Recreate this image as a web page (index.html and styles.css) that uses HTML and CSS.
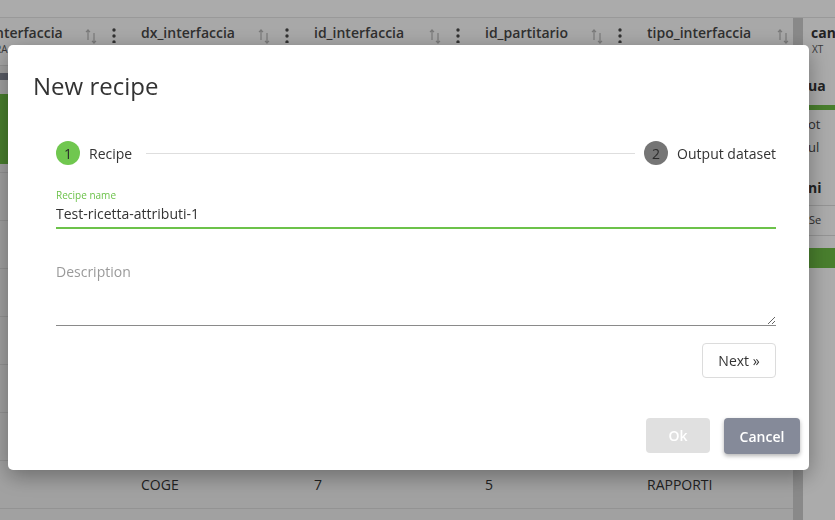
FILE: index.html
```html
<!DOCTYPE html>
<html lang="it">
<head>
<meta charset="utf-8">
<title>New recipe</title>
<link rel="stylesheet" href="styles.css">
</head>
<body>
<div class="app">
  <div class="topband"></div>
  <div class="main">
    <div class="table">
      <div class="thead">
        <div class="hcell col1">
          <div class="hname scrolled"><div class="hn">nterfaccia</div><div class="hs">RA</div></div>
          <svg class="sort" viewBox="0 0 12 16" width="12" height="16"><path d="M3 12V2M1 4.2L3 2l2 2.2M9 5v10M7 12.8L9 15l2-2.2" fill="none" stroke="#b5b5b5" stroke-width="1.2"/></svg>
          <svg class="kebab" viewBox="0 0 4 16" width="4" height="16"><circle cx="2" cy="3" r="1.7"/><circle cx="2" cy="9" r="1.7"/><circle cx="2" cy="15" r="1.7"/></svg>
        </div>
        <div class="hcell col2">
          <div class="hname"><div class="hn">dx_interfaccia</div><div class="hs">STRING</div></div>
          <svg class="sort" viewBox="0 0 12 16" width="12" height="16"><path d="M3 12V2M1 4.2L3 2l2 2.2M9 5v10M7 12.8L9 15l2-2.2" fill="none" stroke="#b5b5b5" stroke-width="1.2"/></svg>
          <svg class="kebab" viewBox="0 0 4 16" width="4" height="16"><circle cx="2" cy="3" r="1.7"/><circle cx="2" cy="9" r="1.7"/><circle cx="2" cy="15" r="1.7"/></svg>
        </div>
        <div class="hcell col3">
          <div class="hname"><div class="hn">id_interfaccia</div><div class="hs">INTEGER</div></div>
          <svg class="sort" viewBox="0 0 12 16" width="12" height="16"><path d="M3 12V2M1 4.2L3 2l2 2.2M9 5v10M7 12.8L9 15l2-2.2" fill="none" stroke="#b5b5b5" stroke-width="1.2"/></svg>
          <svg class="kebab" viewBox="0 0 4 16" width="4" height="16"><circle cx="2" cy="3" r="1.7"/><circle cx="2" cy="9" r="1.7"/><circle cx="2" cy="15" r="1.7"/></svg>
        </div>
        <div class="hcell col4">
          <div class="hname"><div class="hn">id_partitario</div><div class="hs">INTEGER</div></div>
          <svg class="sort" viewBox="0 0 12 16" width="12" height="16"><path d="M3 12V2M1 4.2L3 2l2 2.2M9 5v10M7 12.8L9 15l2-2.2" fill="none" stroke="#b5b5b5" stroke-width="1.2"/></svg>
          <svg class="kebab" viewBox="0 0 4 16" width="4" height="16"><circle cx="2" cy="3" r="1.7"/><circle cx="2" cy="9" r="1.7"/><circle cx="2" cy="15" r="1.7"/></svg>
        </div>
        <div class="hcell col5">
          <div class="hname"><div class="hn">tipo_interfaccia</div><div class="hs">STRING</div></div>
          <svg class="sort" viewBox="0 0 12 16" width="12" height="16"><path d="M3 12V2M1 4.2L3 2l2 2.2M9 5v10M7 12.8L9 15l2-2.2" fill="none" stroke="#b5b5b5" stroke-width="1.2"/></svg>
          <svg class="kebab" viewBox="0 0 4 16" width="4" height="16"><circle cx="2" cy="3" r="1.7"/><circle cx="2" cy="9" r="1.7"/><circle cx="2" cy="15" r="1.7"/></svg>
        </div>
      </div>
      <div class="qrow">
        <div class="qbar"></div>
        <div class="qgreen"></div>
      </div>
      <div class="row"></div>
      <div class="row"></div>
      <div class="row"></div>
      <div class="row"></div>
      <div class="row"></div>
      <div class="row"></div>
      <div class="row"><span class="c col1"></span><span class="c col2">COGE</span><span class="c col3">7</span><span class="c col4">5</span><span class="c col5">RAPPORTI</span></div>
      <div class="row"></div>
    </div>
    <div class="scrollbar"></div>
    <div class="panel">
      <div class="p-head"><div class="p-name">can</div><div class="p-type">XT</div></div>
      <div class="p-title">ua</div>
      <div class="p-bar"></div>
      <div class="p-line">ot</div>
      <div class="p-line">ul</div>
      <div class="p-title p-title2">ni</div>
      <div class="p-sect">Se</div>
      <div class="p-block"></div>
    </div>
  </div>
</div>

<div class="overlay">
  <div class="modal">
    <h1 class="modal-title">New recipe</h1>
    <div class="modal-body">
      <div class="stepper">
        <span class="step-num active">1</span>
        <span class="step-label">Recipe</span>
        <span class="step-line"></span>
        <span class="step-num">2</span>
        <span class="step-label">Output dataset</span>
      </div>
      <label class="field-label">Recipe name</label>
      <input class="field-input" type="text" value="Test-ricetta-attributi-1">
      <textarea class="field-area" placeholder="Description"></textarea>
      <div class="next-row"><button class="btn-next">Next »</button></div>
    </div>
    <div class="modal-footer">
      <button class="btn btn-ok">Ok</button>
      <button class="btn btn-cancel">Cancel</button>
    </div>
  </div>
</div>
</body>
</html>
```
FILE: styles.css
```css
html, body {
  margin: 0;
  padding: 0;
}
body {
  width: 835px;
  height: 520px;
  overflow: hidden;
  font-family: "Open Sans", "Noto Sans", sans-serif;
  color: #333;
  background: #fff;
}

/* ---------- background app ---------- */
.app {
  height: 520px;
  display: flex;
  flex-direction: column;
}
.topband {
  height: 17px;
  flex-shrink: 0;
  background: #fff;
  border-bottom: 1px solid #e4e4e4;
}
.main {
  flex: 1;
  display: flex;
  min-height: 0;
}
.table {
  width: 793px;
  flex-shrink: 0;
  overflow: hidden;
  background: #f1f1f1;
}
.thead {
  display: flex;
  height: 48px;
  box-sizing: border-box;
  border-bottom: 1px solid #dcdcdc;
  background: #fbfbfb;
  white-space: nowrap;
}
.col1 { width: 141px; }
.col2 { width: 173px; }
.col3 { width: 171px; }
.col4 { width: 162px; }
.col5 { width: 186px; }
.hcell {
  flex-shrink: 0;
  display: flex;
  align-items: flex-start;
  box-sizing: border-box;
  padding: 8px 25px 0 0;
}
.hname {
  flex: 1;
  min-width: 0;
}
.hname.scrolled {
  margin-left: -5px;
}
.hn {
  font-size: 14px;
  font-weight: 600;
  line-height: 14px;
  color: #474747;
}
.hs {
  margin-top: 3px;
  font-size: 10px;
  line-height: 12px;
  color: #555;
}
.sort {
  margin-top: 2px;
  margin-right: 15px;
  flex-shrink: 0;
}
.kebab {
  margin-top: 1px;
  fill: #4a4a4a;
  flex-shrink: 0;
}
.qrow {
  height: 107px;
  box-sizing: border-box;
  border-bottom: 1px solid #dcdcdc;
  padding-top: 7px;
}
.qbar {
  width: 130px;
  height: 7px;
  background: #858a98;
}
.qgreen {
  width: 130px;
  height: 70px;
  margin-top: 14px;
  background: #6dbd44;
}
.row {
  display: flex;
  align-items: center;
  height: 48px;
  box-sizing: border-box;
  border-bottom: 1px solid #dcdcdc;
  font-size: 14px;
  color: #333;
  white-space: nowrap;
}
.c {
  flex-shrink: 0;
}
.scrollbar {
  width: 10px;
  flex-shrink: 0;
  background: #cdcdcd;
}
.panel {
  flex: 1;
  min-width: 0;
  background: #fff;
  overflow: hidden;
  white-space: nowrap;
}
.p-head {
  height: 48px;
  box-sizing: border-box;
  padding: 8px 0 0 8px;
}
.p-name {
  font-size: 14px;
  font-weight: 700;
  line-height: 14px;
  color: #333;
}
.p-type {
  margin-top: 3px;
  font-size: 10px;
  line-height: 12px;
  color: #555;
  margin-left: 1px;
}
.p-title {
  margin-top: 10px;
  padding-left: 5px;
  font-size: 14px;
  font-weight: 700;
  line-height: 20px;
  color: #333;
}
.p-title2 {
  margin-top: 22px;
}
.p-bar {
  margin-top: 9px;
  height: 5px;
  background: #6dbd44;
}
.p-line {
  margin-top: 5px;
  padding-left: 5px;
  font-size: 13px;
  line-height: 18px;
  color: #444;
}
.p-sect {
  margin-top: 7px;
  padding: 6px 0 7px 6px;
  border-top: 1px solid #ddd;
  border-bottom: 1px solid #ddd;
  font-size: 11px;
  line-height: 16px;
  color: #444;
}
.p-block {
  margin-top: 12px;
  height: 20px;
  background: #6dbd44;
}

/* ---------- modal ---------- */
.overlay {
  position: fixed;
  inset: 0;
  background: rgba(0, 0, 0, 0.33);
}
.modal {
  margin: 45px 0 0 8px;
  width: 801px;
  height: 425px;
  box-sizing: border-box;
  background: #fff;
  border-radius: 5px;
  box-shadow: 0 6px 22px rgba(0, 0, 0, 0.35);
  display: flex;
  flex-direction: column;
}
.modal-title {
  margin: 24px 0 0 0;
  padding: 0 25px;
  font-size: 24px;
  font-weight: 400;
  line-height: 33px;
  color: #333;
}
.modal-body {
  padding: 0 33px 0 48px;
  display: flex;
  flex-direction: column;
}
.stepper {
  display: flex;
  align-items: center;
  height: 24px;
  margin-top: 39px;
}
.step-num {
  width: 24px;
  height: 24px;
  border-radius: 50%;
  background: #757575;
  color: #2b2b2b;
  display: flex;
  align-items: center;
  justify-content: center;
  font-size: 14px;
  flex-shrink: 0;
}
.step-num.active {
  background: #70c74f;
}
.step-label {
  margin-left: 9px;
  font-size: 14px;
  color: #333;
}
.step-line {
  flex: 1;
  height: 1px;
  background: #dedede;
  margin: 0 9px 0 14px;
}
.field-label {
  margin-top: 23px;
  font-size: 10px;
  line-height: 14px;
  color: #6cc24a;
}
.field-input {
  margin: 2px 0 0 0;
  padding: 0 0 3px 0;
  height: 20px;
  border: 0;
  border-bottom: 2px solid #6cc24a;
  outline: none;
  font-family: "Open Sans", "Noto Sans", sans-serif;
  font-size: 14px;
  line-height: 20px;
  color: #333;
  background: transparent;
}
.field-area {
  margin: 33px 0 0 0;
  padding: 0;
  height: 64px;
  box-sizing: border-box;
  border: 0;
  border-bottom: 1px solid #8a8a8a;
  outline: none;
  font-family: "Open Sans", "Noto Sans", sans-serif;
  font-size: 14px;
  line-height: 20px;
  color: #333;
  background: transparent;
}
.field-area::placeholder {
  color: #9a9a9a;
}
.next-row {
  display: flex;
  justify-content: flex-end;
  margin-top: 17px;
}
.btn-next {
  width: 74px;
  height: 35px;
  border: 1px solid #dcdcdc;
  border-radius: 4px;
  background: #fff;
  font-family: "Open Sans", "Noto Sans", sans-serif;
  font-size: 14px;
  color: #333;
  padding: 0;
}
.modal-footer {
  margin-top: auto;
  display: flex;
  justify-content: flex-end;
  gap: 14px;
  padding: 0 9px 16px 0;
}
.btn {
  height: 35px;
  border: 0;
  border-radius: 4px;
  padding: 0;
  font-family: "Open Sans", "Noto Sans", sans-serif;
  font-size: 14px;
  font-weight: 600;
  color: #fff;
}
.btn-ok {
  width: 64px;
  background: #e0e0e0;
}
.btn-cancel {
  width: 76px;
  height: 36px;
  background: #858a99;
  box-shadow: 0 2px 4px rgba(0, 0, 0, 0.3);
}
```
